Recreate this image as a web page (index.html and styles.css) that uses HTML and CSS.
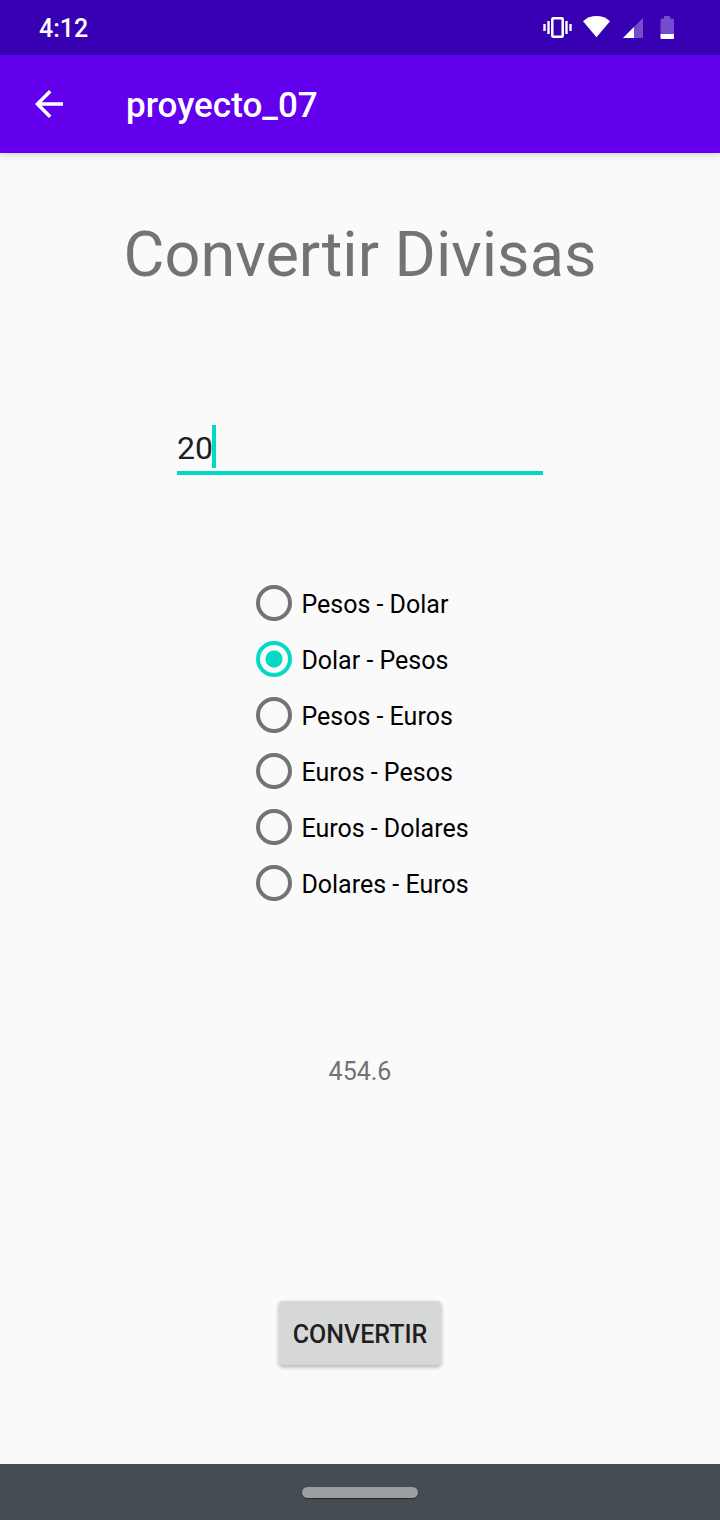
FILE: index.html
```html
<!DOCTYPE html>
<html lang="es">
<head>
<meta charset="utf-8">
<meta name="viewport" content="width=device-width, initial-scale=1">
<title>proyecto_07</title>
<link rel="stylesheet" href="styles.css">
</head>
<body>
<div class="status-bar">
  <span class="clock">4:12</span>
  <div class="status-icons">
    <svg viewBox="0 0 36 55" aria-hidden="true"><rect x="12.3" y="18.3" width="10.4" height="18.4" rx="1" fill="none" stroke="#fff" stroke-width="2.5"/><path d="M8.5 21v13M26.5 21v13M4.5 24v7M30.5 24v7" stroke="#fff" stroke-width="2.4"/></svg>
    <svg viewBox="0 0 36 55" aria-hidden="true"><path d="M7 21.2C10.500 17.800 15.500 16 20.500 16s10 1.800 13.500 5.200L20.500 37.300z" fill="#fff"/></svg>
    <svg viewBox="0 0 36 55" aria-hidden="true"><path d="M11 38L31 18v20z" fill="#fff" fill-opacity=".3"/><path d="M11 38L22 27v11z" fill="#fff"/></svg>
    <svg viewBox="0 0 36 55" aria-hidden="true"><path d="M12.500 34V20q0-1.500 1.500-1.500H16V16h6v2.500h2.500q1.500 0 1.500 1.500v14z" fill="#fff" fill-opacity=".3"/><path d="M12.500 34H26v4q0 1-1 1H13.500q-1 0-1-1z" fill="#fff"/></svg>
  </div>
</div>
<header class="app-bar">
  <button class="back" type="button" aria-label="Atrás">
    <svg viewBox="0 0 24 24" aria-hidden="true"><path d="M20 11H7.830l5.590-5.590L12 4l-8 8 8 8 1.410-1.410L7.830 13H20v-2z" fill="#fff"/></svg>
  </button>
  <span class="app-title">proyecto_07</span>
</header>
<main class="content">
  <h1 class="heading">Convertir Divisas</h1>
  <div class="amount">
    <input class="amount-input" type="text" inputmode="decimal" value="20" aria-label="Cantidad">
    <span class="caret"></span>
  </div>
  <div class="options" role="radiogroup" aria-label="Conversión">
    <label class="option"><input type="radio" name="conversion"><span>Pesos - Dolar</span></label>
    <label class="option"><input type="radio" name="conversion" checked><span>Dolar - Pesos</span></label>
    <label class="option"><input type="radio" name="conversion"><span>Pesos - Euros</span></label>
    <label class="option"><input type="radio" name="conversion"><span>Euros - Pesos</span></label>
    <label class="option"><input type="radio" name="conversion"><span>Euros - Dolares</span></label>
    <label class="option"><input type="radio" name="conversion"><span>Dolares - Euros</span></label>
  </div>
  <output class="result">454.6</output>
  <button class="convert" type="button">CONVERTIR</button>
</main>
<div class="nav-bar"><span class="nav-pill"></span></div>
</body>
</html>
```
FILE: styles.css
```css
* {
  box-sizing: border-box;
}

body {
  margin: 0;
  min-height: 100vh;
  display: flex;
  flex-direction: column;
  background: #fafafa;
  font-family: Roboto, "Liberation Sans", sans-serif;
  font-size: 25px;
  line-height: 30px;
}

.status-bar {
  display: flex;
  align-items: center;
  justify-content: space-between;
  height: 55px;
  padding: 0 36px 0 39px;
  background: #3700b3;
  color: #fff;
}

.clock {
  padding-top: 2px;
  font-weight: 500;
}

.status-icons {
  display: flex;
}

.status-icons svg {
  display: block;
  width: 36px;
  height: 55px;
}

.app-bar {
  display: flex;
  align-items: center;
  gap: 56px;
  height: 98px;
  padding: 0 28px;
  background: #6200ee;
  color: #fff;
  box-shadow: 0 1px 8px rgba(0, 0, 0, 0.2);
  clip-path: inset(0 0 -16px 0);
}

.back {
  padding: 0;
  border: 0;
  background: none;
}

.back svg {
  display: block;
  width: 42px;
  height: 42px;
}

.app-title {
  font-size: 35px;
  font-weight: 500;
  line-height: 42px;
  padding-top: 4px;
}

.content {
  flex: 1;
  display: flex;
  flex-direction: column;
  align-items: center;
  padding: 65px 16px 99px;
}

.heading {
  margin: 0;
  font-size: 63px;
  font-weight: 400;
  line-height: 74px;
  color: #737373;
}

.amount {
  position: relative;
  width: 366px;
  max-width: 100%;
  margin-top: 133px;
  font-size: 32px;
}

.amount-input {
  display: block;
  width: 100%;
  height: 50px;
  padding: 4px 0;
  border: 0;
  border-bottom: 4px solid #03dac5;
  outline: 0;
  background: none;
  color: #212121;
  font: inherit;
  line-height: 38px;
}

.caret {
  position: absolute;
  top: 0;
  left: 35px;
  width: 4px;
  height: 43px;
  background: #03dac5;
}

.options {
  display: flex;
  flex-direction: column;
  margin-top: 100px;
}

.option {
  display: flex;
  align-items: center;
  height: 56px;
  color: #000;
}

.option span {
  padding-top: 4px;
}

.option input {
  appearance: none;
  width: 36px;
  height: 36px;
  margin: 0 9px 0 5px;
  border: 4px solid #737373;
  border-radius: 50%;
}

.option input:checked {
  border-color: #03dac5;
  background: radial-gradient(circle, #03dac5 8px, transparent 9px);
}

.result {
  margin-top: 146px;
  color: #737373;
}

.convert {
  height: 64px;
  margin-top: auto;
  padding: 4px 14px 0;
  border: 0;
  border-radius: 4px;
  background: #d6d7d7;
  box-shadow: 0 2px 4px rgba(0, 0, 0, 0.3);
  color: #1f1f1f;
  font: inherit;
  font-weight: 500;
}

.nav-bar {
  display: flex;
  align-items: center;
  justify-content: center;
  height: 56px;
  background: #454d52;
}

.nav-pill {
  width: 116px;
  height: 11px;
  border-radius: 6px;
  background: #9a9e9f;
  box-shadow: 0 1px 1px rgba(0, 0, 0, 0.5);
}
```
